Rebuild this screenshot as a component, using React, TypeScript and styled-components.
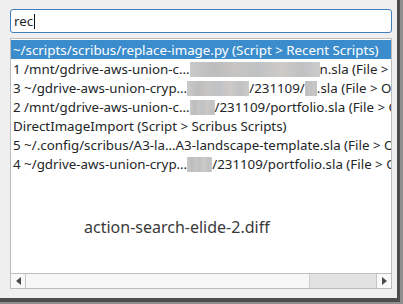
import styled, { createGlobalStyle } from 'styled-components';

const GlobalStyle = createGlobalStyle`
  html, body {
    margin: 0;
    padding: 0;
    background: #8e8e8e;
  }
  body {
    font-family: "Noto Sans", "DejaVu Sans", sans-serif;
    font-size: 13.33px;
  }
`;

const Window = styled.div`
  box-sizing: content-box;
  width: 382px;
  height: 280px;
  padding: 9px 5px 9px 10px;
  background: #efefef;
  border-right: 3px solid #4d4d4d;
  border-bottom: 4px solid #4d4d4d;
  display: flex;
  flex-direction: column;
  gap: 5px;
`;

const SearchBox = styled.div`
  height: 22px;
  border: 1px solid #3f7fbd;
  border-radius: 3px;
  background: #fff;
  display: flex;
  align-items: center;
  padding-left: 3px;
  color: #232627;
`;

const Caret = styled.span`
  display: inline-block;
  width: 1px;
  height: 15px;
  margin-left: 1px;
  background: #111;
`;

const List = styled.div`
  flex: 1;
  min-height: 0;
  border: 1px solid #bdbdbd;
  background: #fff;
  display: flex;
  flex-direction: column;
  overflow: hidden;
`;

const Rows = styled.div`
  flex: 1;
  min-height: 0;
  padding-top: 1px;
  overflow: hidden;
  display: flex;
  flex-direction: column;
`;

const Row = styled.div<{ selected?: boolean }>`
  flex: none;
  height: 19px;
  line-height: 20px;
  padding-left: 2px;
  white-space: nowrap;
  overflow: hidden;
  color: ${p => (p.selected ? '#fff' : '#232627')};
  background: ${p => (p.selected ? '#3a8ccc' : 'transparent')};
`;

const Redact = styled.span<{ w: number }>`
  display: inline-block;
  vertical-align: middle;
  width: ${p => p.w}px;
  height: 15px;
  margin-top: -2px;
  background: linear-gradient(
    90deg,
    #c9c9c9 0%,
    #bdbdbd 18%,
    #c7c5c2 34%,
    #bfc2c4 52%,
    #cdcac6 70%,
    #c0c1c3 86%,
    #cbcbcb 100%
  );
`;

const Caption = styled.div`
  flex: none;
  margin-top: 43px;
  padding-left: 73px;
  font-size: 16px;
  color: #3a3a3a;
`;

const HScroll = styled.div`
  flex: none;
  height: 14px;
  border-top: 1px solid #bdbdbd;
  display: flex;
  background: #f7f7f7;
`;

const ArrowButton = styled.div<{ side: 'left' | 'right' }>`
  width: 14px;
  display: flex;
  align-items: center;
  justify-content: center;
  background: #f9f9f9;
  ${p => (p.side === 'left' ? 'border-right: 1px solid #c4c4c4;' : 'border-left: 1px solid #c4c4c4;')}
`;

const Track = styled.div`
  flex: 1;
  display: flex;
  justify-content: flex-end;
`;

const Thumb = styled.div`
  width: 66px;
  background: #e2e2e2;
  border-left: 1px solid #cfcfcf;
`;

function Arrow({ dir }: { dir: 'left' | 'right' }) {
  return (
    <svg width="5" height="8" viewBox="0 0 5 8">
      {dir === 'left' ? (
        <polygon points="5,0 0,4 5,8" fill="#4a4a4a" />
      ) : (
        <polygon points="0,0 5,4 0,8" fill="#4a4a4a" />
      )}
    </svg>
  );
}

function App() {
  return (
    <>
      <GlobalStyle />
      <Window>
        <SearchBox>
          rec<Caret />
        </SearchBox>
        <List>
          <Rows>
            <Row selected>~/scripts/scribus/replace-image.py (Script &gt; Recent Scripts)</Row>
            <Row>
              1 /mnt/gdrive-aws-union-c…<Redact w={130} />n.sla (File &gt; Open Recent)
            </Row>
            <Row>
              3 ~/gdrive-aws-union-cryp…<Redact w={62} />/231109/<Redact w={12} />.sla (File &gt; Open Recent)
            </Row>
            <Row>
              2 /mnt/gdrive-aws-union-c…<Redact w={25} />/231109/portfolio.sla (File &gt; Open Recent)
            </Row>
            <Row>DirectImageImport (Script &gt; Scribus Scripts)</Row>
            <Row>5 ~/.config/scribus/A3-la…A3-landscape-template.sla (File &gt; Open Recent)</Row>
            <Row>
              4 ~/gdrive-aws-union-cryp…<Redact w={25} />/231109/portfolio.sla (File &gt; Open Recent)
            </Row>
            <Caption>action-search-elide-2.diff</Caption>
          </Rows>
          <HScroll>
            <ArrowButton side="left">
              <Arrow dir="left" />
            </ArrowButton>
            <Track>
              <Thumb />
            </Track>
            <ArrowButton side="right">
              <Arrow dir="right" />
            </ArrowButton>
          </HScroll>
        </List>
      </Window>
    </>
  );
}

export default App;
